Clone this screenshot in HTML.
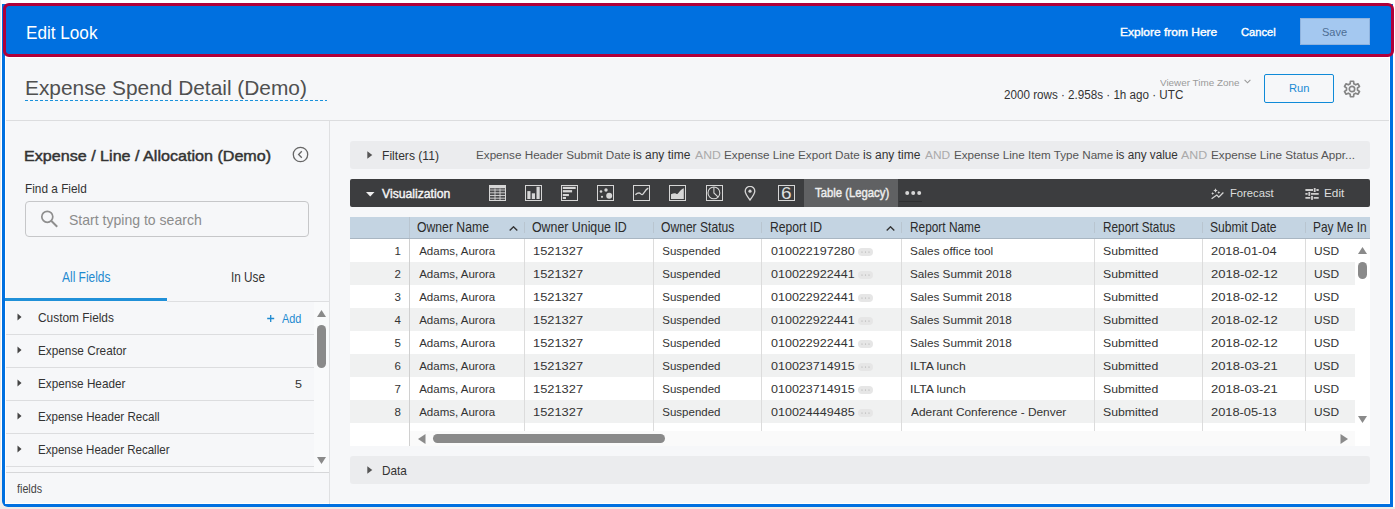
<!DOCTYPE html>
<html><head><meta charset="utf-8">
<style>
*{box-sizing:border-box;margin:0;padding:0}
html,body{width:1395px;height:509px;overflow:hidden;background:#fff;font-family:"Liberation Sans",sans-serif;}
.a{position:absolute;white-space:nowrap;line-height:1}
.s{position:absolute}

</style></head><body>
<div class="s" style="left:0px;top:0px;width:1px;height:509px;background:#e9e9e9;"></div>
<div class="s" style="left:0px;top:470px;width:2px;height:39px;background:#f1eeeb;"></div>
<div class="s" style="left:0px;top:498px;width:8px;height:11px;background:#f1eeeb;"></div>
<div class="s" style="left:0px;top:507px;width:1395px;height:2px;background:#eeebe8;"></div>
<div class="s" style="left:2px;top:4px;width:1391px;height:503px;background:#0070e0;border-radius:0 0 0 6px"></div>
<div class="s" style="left:5px;top:7px;width:1385px;height:497px;background:#fff;"></div>
<div class="s" style="left:6px;top:58px;width:1383px;height:445px;background:#f6f7f9;"></div>
<div class="s" style="left:3px;top:3px;width:1391px;height:54px;border:3px solid #b0003a;border-radius:6px;background:#0070e0"></div>
<div class="s" style="left:1300px;top:18px;width:70px;height:27px;background:#a4c8f0;border:1px solid #8fb3de"></div>
<svg class="s" style="left:25px;top:100px" width="302" height="1" viewBox="0 0 302 1"><line x1="0" y1="0.5" x2="302" y2="0.5" stroke="#1a92dc" stroke-width="1.1" stroke-dasharray="3 2"/></svg>
<svg class="s" style="left:1244px;top:79px" width="7" height="5" viewBox="0 0 7 5"><path d="M0.6 0.8 L3.5 3.8 L6.4 0.8" fill="none" stroke="#9a9a9a" stroke-width="1.1"/></svg>
<div class="s" style="left:1264px;top:74px;width:70px;height:29px;border:1px solid #0f8ad8;border-radius:2px;background:#f6f7f9"></div>
<svg class="s" style="left:1343px;top:80px" width="18" height="18" viewBox="0 0 18 18"><path d="M7.18 3.71 L7.42 1.26 L10.58 1.26 L10.82 3.71 L12.67 4.77 L14.92 3.77 L16.49 6.49 L14.50 7.93 L14.50 10.07 L16.49 11.51 L14.92 14.23 L12.67 13.23 L10.82 14.29 L10.58 16.74 L7.42 16.74 L7.18 14.29 L5.33 13.23 L3.08 14.23 L1.51 11.51 L3.50 10.07 L3.50 7.93 L1.51 6.49 L3.08 3.77 L5.33 4.77z" fill="none" stroke="#858585" stroke-width="1.7" stroke-linejoin="round"/><circle cx="9" cy="9" r="2.7" fill="none" stroke="#858585" stroke-width="1.7"/></svg>
<div class="s" style="left:6px;top:120px;width:1383px;height:1px;background:#dcdddf;"></div>
<div class="s" style="left:329px;top:121px;width:1px;height:383px;background:#dfe0e2;"></div>
<svg class="s" style="left:292px;top:146px" width="17" height="17" viewBox="0 0 17 17"><circle cx="8.5" cy="8.5" r="7.2" fill="none" stroke="#666" stroke-width="1.3"/><path d="M9.8 5.3 L6.6 8.5 L9.8 11.7" fill="none" stroke="#666" stroke-width="1.3"/></svg>
<div class="s" style="left:25px;top:201px;width:284px;height:36px;border:1px solid #c6c7c9;border-radius:4px"></div>
<svg class="s" style="left:40px;top:209px" width="19" height="19" viewBox="0 0 19 19"><circle cx="7.3" cy="7.8" r="5.5" fill="none" stroke="#8e8e8e" stroke-width="1.7"/><path d="M11.2 11.7 L17.2 17.7" stroke="#8e8e8e" stroke-width="2"/></svg>
<div class="s" style="left:5px;top:298px;width:162px;height:3px;background:#2090d8;"></div>
<div class="s" style="left:167px;top:301px;width:162px;height:1px;background:#dedfe1;"></div>
<svg class="s" style="left:17px;top:313px" width="5" height="8" viewBox="0 0 5 8"><path d="M0.5 0.5 L4.5 4 L0.5 7.5z" fill="#444"/></svg>
<div class="s" style="left:6px;top:334px;width:308px;height:1px;background:#dcdddf;"></div>
<svg class="s" style="left:17px;top:346px" width="5" height="8" viewBox="0 0 5 8"><path d="M0.5 0.5 L4.5 4 L0.5 7.5z" fill="#444"/></svg>
<div class="s" style="left:6px;top:367px;width:308px;height:1px;background:#dcdddf;"></div>
<svg class="s" style="left:17px;top:379px" width="5" height="8" viewBox="0 0 5 8"><path d="M0.5 0.5 L4.5 4 L0.5 7.5z" fill="#444"/></svg>
<div class="s" style="left:6px;top:400px;width:308px;height:1px;background:#dcdddf;"></div>
<svg class="s" style="left:17px;top:412px" width="5" height="8" viewBox="0 0 5 8"><path d="M0.5 0.5 L4.5 4 L0.5 7.5z" fill="#444"/></svg>
<div class="s" style="left:6px;top:433px;width:308px;height:1px;background:#dcdddf;"></div>
<svg class="s" style="left:17px;top:445px" width="5" height="8" viewBox="0 0 5 8"><path d="M0.5 0.5 L4.5 4 L0.5 7.5z" fill="#444"/></svg>
<div class="s" style="left:6px;top:466px;width:308px;height:1px;background:#dcdddf;"></div>
<svg class="s" style="left:267px;top:315px" width="8" height="7" viewBox="0 0 8 7"><path d="M3.7 0 V7 M0.2 3.5 H7.2" stroke="#1f8ad0" stroke-width="1.3"/></svg>
<div class="s" style="left:314px;top:302px;width:15px;height:170px;background:#f9fafb;"></div>
<svg class="s" style="left:317px;top:310px" width="9" height="7" viewBox="0 0 9 7"><path d="M0 7 L4.5 0 L9 7z" fill="#8a8a8a"/></svg>
<div class="s" style="left:317px;top:325px;width:9px;height:43px;background:#8a8a8a;border-radius:4.5px"></div>
<svg class="s" style="left:317px;top:457px" width="9" height="7" viewBox="0 0 9 7"><path d="M0 0 L4.5 7 L9 0z" fill="#8a8a8a"/></svg>
<div class="s" style="left:6px;top:472px;width:323px;height:1px;background:#d6d7d9;"></div>
<div class="s" style="left:350px;top:141px;width:1020px;height:28px;background:#ebecee;border-radius:3px"></div>
<svg class="s" style="left:367px;top:151px" width="6" height="8" viewBox="0 0 6 8"><path d="M0.3 0.3 L5.3 4 L0.3 7.7z" fill="#555"/></svg>
<div class="s" style="left:350px;top:179px;width:1020px;height:28px;background:#3c3d3f;border-radius:2px"></div>
<svg class="s" style="left:366px;top:192px" width="9" height="5" viewBox="0 0 9 5"><path d="M0 0 L8.5 0 L4.25 4.5z" fill="#eee"/></svg>
<svg class="s" style="left:489px;top:185px" width="17" height="16" viewBox="0 0 17 16"><rect x="0.5" y="0.5" width="16" height="15" fill="none" stroke="#d6d6d6"/><rect x="1" y="1" width="15" height="2.5" fill="#d6d6d6"/><rect x="1" y="3.5" width="15" height="11.5" fill="#4a4b4d"/><path d="M1 5H16M1 7.8H16M1 10.5H16M1 13.2H16M6 3.5V15M11 3.5V15" stroke="#d6d6d6" stroke-width="0.9"/></svg>
<svg class="s" style="left:525px;top:185px" width="17" height="16" viewBox="0 0 17 16"><rect x="0.5" y="0.5" width="16" height="15" fill="none" stroke="#d6d6d6"/><rect x="2.3" y="6.1" width="3.2" height="7.9" fill="#d6d6d6"/><rect x="6.8" y="8.3" width="3.2" height="5.7" fill="#d6d6d6"/><rect x="11.5" y="1.8" width="3.2" height="12.2" fill="#d6d6d6"/></svg>
<svg class="s" style="left:561px;top:185px" width="17" height="16" viewBox="0 0 17 16"><rect x="0.5" y="0.5" width="16" height="15" fill="none" stroke="#d6d6d6"/><rect x="1.8" y="1.8" width="12.9" height="2.2" fill="#d6d6d6"/><rect x="1.8" y="5.1" width="9.3" height="2.3" fill="#d6d6d6"/><rect x="1.8" y="9" width="6.1" height="2.1" fill="#d6d6d6"/><rect x="1.8" y="12" width="3.2" height="2" fill="#d6d6d6"/></svg>
<svg class="s" style="left:597px;top:185px" width="17" height="16" viewBox="0 0 17 16"><rect x="0.5" y="0.5" width="16" height="15" fill="none" stroke="#d6d6d6"/><circle cx="4" cy="6.5" r="1.3" fill="#d6d6d6"/><circle cx="9" cy="5" r="1.7" fill="#d6d6d6"/><circle cx="5" cy="11.8" r="1.1" fill="#d6d6d6"/><circle cx="12.2" cy="10.8" r="3" fill="#d6d6d6"/></svg>
<svg class="s" style="left:633px;top:185px" width="17" height="16" viewBox="0 0 17 16"><rect x="0.5" y="0.5" width="16" height="15" fill="none" stroke="#d6d6d6"/><path d="M2.4 9.7 C4 8 5 7.9 6 7.9 C7.5 8 8 9.7 9.2 9.7 C10.5 9.7 12 4.5 15.3 3.2" fill="none" stroke="#d6d6d6" stroke-width="1.3"/></svg>
<svg class="s" style="left:669px;top:185px" width="17" height="16" viewBox="0 0 17 16"><rect x="0.5" y="0.5" width="16" height="15" fill="none" stroke="#d6d6d6"/><path d="M2 14 V9.2 C3.5 8.5 5 8.2 6.2 8.3 C7.2 8.5 7.5 9.3 8.3 9 C10 8 11.5 4.3 14.8 3.3 V14z" fill="#d6d6d6"/></svg>
<svg class="s" style="left:706px;top:185px" width="17" height="16" viewBox="0 0 17 16"><rect x="0.5" y="0.5" width="16" height="15" fill="none" stroke="#d6d6d6"/><circle cx="7.9" cy="7.9" r="5.9" fill="none" stroke="#d6d6d6" stroke-width="1.1"/><path d="M7.9 2 V7.9 L12.2 12.2" fill="none" stroke="#d6d6d6" stroke-width="1.1"/></svg>
<svg class="s" style="left:744px;top:186px" width="12" height="15" viewBox="0 0 12 15"><path d="M6 14 C3 10 1.2 7.5 1.2 5.2 A4.8 4.8 0 0 1 10.8 5.2 C10.8 7.5 9 10 6 14z" fill="none" stroke="#d6d6d6" stroke-width="1.3"/><circle cx="6" cy="5.2" r="1.6" fill="#d6d6d6"/></svg>
<svg class="s" style="left:778px;top:185px" width="17" height="16" viewBox="0 0 17 16"><rect x="0.5" y="0.5" width="16" height="15" fill="none" stroke="#d6d6d6"/></svg>
<div class="s" style="left:804px;top:179px;width:94px;height:28px;background:#606163;"></div>
<svg class="s" style="left:905px;top:190px" width="17" height="6" viewBox="0 0 17 6"><circle cx="2.2" cy="3" r="2" fill="#d6d6d6"/><circle cx="8.2" cy="3" r="2" fill="#d6d6d6"/><circle cx="14.2" cy="3" r="2" fill="#d6d6d6"/></svg>
<div class="s" style="left:899px;top:201px;width:23px;height:1px;background:#2f3032;"></div>
<svg class="s" style="left:1210px;top:187px" width="15" height="14" viewBox="0 0 15 14"><path d="M1.6 11.8 L6.8 8 L8.8 10.1 L13.4 5.5" fill="none" stroke="#d6d6d6" stroke-width="1.3"/><path d="M5.5 1.3 L6.2 2.8 L7.7 3.5 L6.2 4.2 L5.5 5.7 L4.8 4.2 L3.3 3.5 L4.8 2.8z M2.7 5 L3.2 6 L4.2 6.5 L3.2 7 L2.7 8 L2.2 7 L1.2 6.5 L2.2 6z M8.8 4 L9.3 5 L10.3 5.5 L9.3 6 L8.8 7 L8.3 6 L7.3 5.5 L8.3 5z" fill="#d6d6d6"/></svg>
<svg class="s" style="left:1305px;top:187px" width="14" height="14" viewBox="0 0 14 14"><path d="M0.4 3H13.7M0.4 6.9H13.7M0.4 10.9H13.7" stroke="#cfcfcf" stroke-width="1.8"/><rect x="8" y="0.5" width="3.4" height="5" fill="#3c3d3f"/><rect x="8.8" y="1" width="1.8" height="4" fill="#cfcfcf"/><rect x="2.6" y="4.4" width="3.4" height="5" fill="#3c3d3f"/><rect x="3.4" y="4.9" width="1.8" height="4" fill="#cfcfcf"/><rect x="5.3" y="8.4" width="3.4" height="5" fill="#3c3d3f"/><rect x="6.1" y="8.9" width="1.8" height="4" fill="#cfcfcf"/></svg>
<div class="s" style="left:350px;top:217px;width:1020px;height:229px;background:#fff;"></div>
<div class="s" style="left:350px;top:217px;width:1020px;height:21px;background:#c4d4e2;"></div>
<div class="s" style="left:350px;top:238px;width:1020px;height:1px;background:#a9b6c2;"></div>
<div class="s" style="left:350px;top:262px;width:1005px;height:23px;background:#f0f1f1;"></div>
<div class="s" style="left:350px;top:308px;width:1005px;height:23px;background:#f0f1f1;"></div>
<div class="s" style="left:350px;top:354px;width:1005px;height:23px;background:#f0f1f1;"></div>
<div class="s" style="left:350px;top:400px;width:1005px;height:23px;background:#f0f1f1;"></div>
<div class="s" style="left:410px;top:431px;width:945px;height:15px;background:#fafafa;"></div>
<div class="s" style="left:524px;top:239px;width:1px;height:192px;background:#dcdcdc;"></div>
<div class="s" style="left:524px;top:222px;width:1px;height:11px;background:#b9c5d0;"></div>
<div class="s" style="left:653px;top:239px;width:1px;height:192px;background:#dcdcdc;"></div>
<div class="s" style="left:653px;top:222px;width:1px;height:11px;background:#b9c5d0;"></div>
<div class="s" style="left:761px;top:239px;width:1px;height:192px;background:#dcdcdc;"></div>
<div class="s" style="left:761px;top:222px;width:1px;height:11px;background:#b9c5d0;"></div>
<div class="s" style="left:901px;top:239px;width:1px;height:192px;background:#dcdcdc;"></div>
<div class="s" style="left:901px;top:222px;width:1px;height:11px;background:#b9c5d0;"></div>
<div class="s" style="left:1094px;top:239px;width:1px;height:192px;background:#dcdcdc;"></div>
<div class="s" style="left:1094px;top:222px;width:1px;height:11px;background:#b9c5d0;"></div>
<div class="s" style="left:1202px;top:239px;width:1px;height:192px;background:#dcdcdc;"></div>
<div class="s" style="left:1202px;top:222px;width:1px;height:11px;background:#b9c5d0;"></div>
<div class="s" style="left:1305px;top:239px;width:1px;height:192px;background:#dcdcdc;"></div>
<div class="s" style="left:1305px;top:222px;width:1px;height:11px;background:#b9c5d0;"></div>
<div class="s" style="left:409px;top:239px;width:1px;height:207px;background:#d0d0d0;"></div>
<div class="s" style="left:409px;top:217px;width:1px;height:21px;background:#b9c5d0;"></div>
<div class="s" style="left:858px;top:248px;width:15px;height:8px;background:#e6e6e6;border-radius:4px"></div>
<svg class="s" style="left:861px;top:251px" width="9" height="2" viewBox="0 0 9 2"><circle cx="1" cy="1" r="0.6" fill="#aaa"/><circle cx="4.5" cy="1" r="0.6" fill="#aaa"/><circle cx="8" cy="1" r="0.6" fill="#aaa"/></svg>
<div class="s" style="left:858px;top:271px;width:15px;height:8px;background:#e6e6e6;border-radius:4px"></div>
<svg class="s" style="left:861px;top:274px" width="9" height="2" viewBox="0 0 9 2"><circle cx="1" cy="1" r="0.6" fill="#aaa"/><circle cx="4.5" cy="1" r="0.6" fill="#aaa"/><circle cx="8" cy="1" r="0.6" fill="#aaa"/></svg>
<div class="s" style="left:858px;top:294px;width:15px;height:8px;background:#e6e6e6;border-radius:4px"></div>
<svg class="s" style="left:861px;top:297px" width="9" height="2" viewBox="0 0 9 2"><circle cx="1" cy="1" r="0.6" fill="#aaa"/><circle cx="4.5" cy="1" r="0.6" fill="#aaa"/><circle cx="8" cy="1" r="0.6" fill="#aaa"/></svg>
<div class="s" style="left:858px;top:317px;width:15px;height:8px;background:#e6e6e6;border-radius:4px"></div>
<svg class="s" style="left:861px;top:320px" width="9" height="2" viewBox="0 0 9 2"><circle cx="1" cy="1" r="0.6" fill="#aaa"/><circle cx="4.5" cy="1" r="0.6" fill="#aaa"/><circle cx="8" cy="1" r="0.6" fill="#aaa"/></svg>
<div class="s" style="left:858px;top:340px;width:15px;height:8px;background:#e6e6e6;border-radius:4px"></div>
<svg class="s" style="left:861px;top:343px" width="9" height="2" viewBox="0 0 9 2"><circle cx="1" cy="1" r="0.6" fill="#aaa"/><circle cx="4.5" cy="1" r="0.6" fill="#aaa"/><circle cx="8" cy="1" r="0.6" fill="#aaa"/></svg>
<div class="s" style="left:858px;top:363px;width:15px;height:8px;background:#e6e6e6;border-radius:4px"></div>
<svg class="s" style="left:861px;top:366px" width="9" height="2" viewBox="0 0 9 2"><circle cx="1" cy="1" r="0.6" fill="#aaa"/><circle cx="4.5" cy="1" r="0.6" fill="#aaa"/><circle cx="8" cy="1" r="0.6" fill="#aaa"/></svg>
<div class="s" style="left:858px;top:386px;width:15px;height:8px;background:#e6e6e6;border-radius:4px"></div>
<svg class="s" style="left:861px;top:389px" width="9" height="2" viewBox="0 0 9 2"><circle cx="1" cy="1" r="0.6" fill="#aaa"/><circle cx="4.5" cy="1" r="0.6" fill="#aaa"/><circle cx="8" cy="1" r="0.6" fill="#aaa"/></svg>
<div class="s" style="left:858px;top:409px;width:15px;height:8px;background:#e6e6e6;border-radius:4px"></div>
<svg class="s" style="left:861px;top:412px" width="9" height="2" viewBox="0 0 9 2"><circle cx="1" cy="1" r="0.6" fill="#aaa"/><circle cx="4.5" cy="1" r="0.6" fill="#aaa"/><circle cx="8" cy="1" r="0.6" fill="#aaa"/></svg>
<svg class="s" style="left:509px;top:226px" width="9" height="5" viewBox="0 0 9 5"><path d="M0.7 4.5 L4.5 0.8 L8.3 4.5" fill="none" stroke="#333" stroke-width="1.4"/></svg>
<svg class="s" style="left:886px;top:226px" width="9" height="5" viewBox="0 0 9 5"><path d="M0.7 4.5 L4.5 0.8 L8.3 4.5" fill="none" stroke="#333" stroke-width="1.4"/></svg>
<svg class="s" style="left:418px;top:434px" width="8" height="10" viewBox="0 0 8 10"><path d="M7.5 0 L0 5 L7.5 10z" fill="#8a8a8a"/></svg>
<div class="s" style="left:433px;top:434px;width:232px;height:9px;background:#8a8a8a;border-radius:4.5px"></div>
<svg class="s" style="left:1340px;top:434px" width="8" height="10" viewBox="0 0 8 10"><path d="M0.5 0 L8 5 L0.5 10z" fill="#8a8a8a"/></svg>
<svg class="s" style="left:1358px;top:247px" width="9" height="7" viewBox="0 0 9 7"><path d="M0 7 L4.5 0 L9 7z" fill="#8a8a8a"/></svg>
<div class="s" style="left:1358px;top:262px;width:9px;height:17px;background:#8a8a8a;border-radius:4.5px"></div>
<svg class="s" style="left:1358px;top:416px" width="9" height="7" viewBox="0 0 9 7"><path d="M0 0 L4.5 7 L9 0z" fill="#8a8a8a"/></svg>
<div class="s" style="left:350px;top:456px;width:1020px;height:28px;background:#ebecee;border-radius:3px"></div>
<svg class="s" style="left:367px;top:466px" width="6" height="8" viewBox="0 0 6 8"><path d="M0.3 0.3 L5.3 4 L0.3 7.7z" fill="#555"/></svg>
<div class="a" style="left:25.57px;top:24.10px;font-size:18.5px;font-weight:normal;color:#fff;transform:scaleX(0.9263);transform-origin:0 0;">Edit Look</div>
<div class="a" style="left:1119.56px;top:26.90px;font-size:11.5px;font-weight:normal;color:#fff;transform:scaleX(1.0424);transform-origin:0 0;-webkit-text-stroke-width:0.4px;">Explore from Here</div>
<div class="a" style="left:1241.00px;top:26.90px;font-size:11.5px;font-weight:normal;color:#fff;transform:scaleX(0.9667);transform-origin:0 0;-webkit-text-stroke-width:0.4px;">Cancel</div>
<div class="a" style="left:1322.04px;top:26.90px;font-size:11.5px;font-weight:normal;color:#4d6e94;transform:scaleX(0.9600);transform-origin:0 0;">Save</div>
<div class="a" style="left:24.56px;top:77.70px;font-size:20.5px;font-weight:normal;color:#505050;transform:scaleX(1.0182);transform-origin:0 0;">Expense Spend Detail (Demo)</div>
<div class="a" style="left:1160.00px;top:78.80px;font-size:9.3px;font-weight:normal;color:#9a9a9a;transform:scaleX(1.0622);transform-origin:0 0;">Viewer Time Zone</div>
<div class="a" style="left:1003.73px;top:88.90px;font-size:12px;font-weight:normal;color:#333;transform:scaleX(0.9705);transform-origin:0 0;">2000 rows · 2.958s · 1h ago · UTC</div>
<div class="a" style="left:1288.63px;top:83.10px;font-size:11.5px;font-weight:normal;color:#1a8ad4;transform:scaleX(0.9700);transform-origin:0 0;">Run</div>
<div class="a" style="left:24.43px;top:148.30px;font-size:15px;font-weight:normal;color:#333;transform:scaleX(1.0738);transform-origin:0 0;-webkit-text-stroke-width:0.45px;">Expense / Line / Allocation (Demo)</div>
<div class="a" style="left:24.79px;top:181.90px;font-size:13px;font-weight:normal;color:#333;transform:scaleX(0.9091);transform-origin:0 0;">Find a Field</div>
<div class="a" style="left:69.23px;top:212.50px;font-size:14.5px;font-weight:normal;color:#8c8c8c;transform:scaleX(0.9689);transform-origin:0 0;">Start typing to search</div>
<div class="a" style="left:62.40px;top:270.00px;font-size:14px;font-weight:normal;color:#1f8ad0;transform:scaleX(0.8536);transform-origin:0 0;">All Fields</div>
<div class="a" style="left:230.96px;top:270.00px;font-size:14px;font-weight:normal;color:#333;transform:scaleX(0.8385);transform-origin:0 0;">In Use</div>
<div class="a" style="left:38.32px;top:311.00px;font-size:13.5px;font-weight:normal;color:#333;transform:scaleX(0.8800);transform-origin:0 0;">Custom Fields</div>
<div class="a" style="left:38.33px;top:344.00px;font-size:13.5px;font-weight:normal;color:#333;transform:scaleX(0.8730);transform-origin:0 0;">Expense Creator</div>
<div class="a" style="left:38.33px;top:377.00px;font-size:13.5px;font-weight:normal;color:#333;transform:scaleX(0.8687);transform-origin:0 0;">Expense Header</div>
<div class="a" style="left:38.34px;top:410.00px;font-size:13.5px;font-weight:normal;color:#333;transform:scaleX(0.8571);transform-origin:0 0;">Expense Header Recall</div>
<div class="a" style="left:38.35px;top:443.00px;font-size:13.5px;font-weight:normal;color:#333;transform:scaleX(0.8549);transform-origin:0 0;">Expense Header Recaller</div>
<div class="a" style="left:281.80px;top:311.60px;font-size:13px;font-weight:normal;color:#1f8ad0;transform:scaleX(0.8391);transform-origin:0 0;">Add</div>
<div class="a" style="left:294.66px;top:379.00px;font-size:11px;font-weight:normal;color:#333;transform:scaleX(1.1400);transform-origin:0 0;">5</div>
<div class="a" style="left:17.30px;top:482.90px;font-size:12px;font-weight:normal;color:#444;transform:scaleX(0.8964);transform-origin:0 0;">fields</div>
<div class="a" style="left:381.70px;top:148.70px;font-size:13.5px;font-weight:normal;color:#333;transform:scaleX(0.8968);transform-origin:0 0;">Filters (11)</div>
<div class="a" style="left:475.83px;top:150.70px;font-size:10px;font-weight:normal;color:#555;transform:scaleX(1.1679);transform-origin:0 0;">Expense Header Submit Date</div>
<div class="a" style="left:633.00px;top:148.70px;font-size:12px;font-weight:normal;color:#333;">is any time</div>
<div class="a" style="left:695.00px;top:150.70px;font-size:10px;font-weight:normal;color:#aaa;transform:scaleX(1.2190);transform-origin:0 0;">AND</div>
<div class="a" style="left:724.43px;top:150.70px;font-size:10px;font-weight:normal;color:#555;transform:scaleX(1.1687);transform-origin:0 0;">Expense Line Export Date</div>
<div class="a" style="left:863.00px;top:148.70px;font-size:12px;font-weight:normal;color:#333;">is any time</div>
<div class="a" style="left:925.00px;top:150.70px;font-size:10px;font-weight:normal;color:#aaa;transform:scaleX(1.1905);transform-origin:0 0;">AND</div>
<div class="a" style="left:954.33px;top:150.70px;font-size:10px;font-weight:normal;color:#555;transform:scaleX(1.1667);transform-origin:0 0;">Expense Line Item Type Name</div>
<div class="a" style="left:1115.52px;top:148.70px;font-size:12px;font-weight:normal;color:#333;transform:scaleX(0.9758);transform-origin:0 0;">is any value</div>
<div class="a" style="left:1181.00px;top:150.70px;font-size:10px;font-weight:normal;color:#aaa;transform:scaleX(1.2381);transform-origin:0 0;">AND</div>
<div class="a" style="left:1210.83px;top:150.70px;font-size:10px;font-weight:normal;color:#555;transform:scaleX(1.1711);transform-origin:0 0;">Expense Line Status Appr...</div>
<div class="a" style="left:381.80px;top:186.70px;font-size:13.5px;font-weight:normal;color:#f4f4f4;transform:scaleX(0.9040);transform-origin:0 0;-webkit-text-stroke-width:0.45px;">Visualization</div>
<div class="a" style="left:780.51px;top:186.00px;font-size:16px;font-weight:normal;color:#ddd;transform:scaleX(1.1857);transform-origin:0 0;">6</div>
<div class="a" style="left:814.50px;top:185.90px;font-size:13.5px;font-weight:normal;color:#eee;transform:scaleX(0.8375);transform-origin:0 0;-webkit-text-stroke-width:0.45px;">Table (Legacy)</div>
<div class="a" style="left:1230.02px;top:188.00px;font-size:11.5px;font-weight:normal;color:#ddd;transform:scaleX(0.9773);transform-origin:0 0;">Forecast</div>
<div class="a" style="left:1324.47px;top:188.00px;font-size:11.5px;font-weight:normal;color:#ddd;transform:scaleX(1.0263);transform-origin:0 0;">Edit</div>
<div class="a" style="left:417.44px;top:220.10px;font-size:14.2px;font-weight:normal;color:#2b2b2b;transform:scaleX(0.8610);transform-origin:0 0;">Owner Name</div>
<div class="a" style="left:531.93px;top:220.10px;font-size:14.2px;font-weight:normal;color:#2b2b2b;transform:scaleX(0.8710);transform-origin:0 0;">Owner Unique ID</div>
<div class="a" style="left:661.05px;top:220.10px;font-size:14.2px;font-weight:normal;color:#2b2b2b;transform:scaleX(0.8529);transform-origin:0 0;">Owner Status</div>
<div class="a" style="left:769.64px;top:220.10px;font-size:14.2px;font-weight:normal;color:#2b2b2b;transform:scaleX(0.8559);transform-origin:0 0;">Report ID</div>
<div class="a" style="left:909.76px;top:220.10px;font-size:14.2px;font-weight:normal;color:#2b2b2b;transform:scaleX(0.8361);transform-origin:0 0;">Report Name</div>
<div class="a" style="left:1102.67px;top:220.10px;font-size:14.2px;font-weight:normal;color:#2b2b2b;transform:scaleX(0.8314);transform-origin:0 0;">Report Status</div>
<div class="a" style="left:1210.15px;top:220.10px;font-size:14.2px;font-weight:normal;color:#2b2b2b;transform:scaleX(0.8532);transform-origin:0 0;">Submit Date</div>
<div class="a" style="left:1313.46px;top:220.10px;font-size:14.2px;font-weight:normal;color:#2b2b2b;transform:scaleX(0.8387);transform-origin:0 0;">Pay Me In</div>
<div class="a" style="left:394.60px;top:245.90px;font-size:11.5px;font-weight:normal;color:#333;">1</div>
<div class="a" style="left:419.20px;top:245.90px;font-size:11.5px;font-weight:normal;color:#333;">Adams, Aurora</div>
<div class="a" style="left:533.18px;top:245.90px;font-size:11.5px;font-weight:normal;color:#333;transform:scaleX(1.1186);transform-origin:0 0;">1521327</div>
<div class="a" style="left:662.30px;top:245.90px;font-size:11.5px;font-weight:normal;color:#333;">Suspended</div>
<div class="a" style="left:771.00px;top:245.90px;font-size:11.5px;font-weight:normal;color:#333;transform:scaleX(1.0895);transform-origin:0 0;">010022197280</div>
<div class="a" style="left:909.97px;top:245.90px;font-size:11.5px;font-weight:normal;color:#333;transform:scaleX(1.0275);transform-origin:0 0;">Sales office tool</div>
<div class="a" style="left:1102.93px;top:245.90px;font-size:11.5px;font-weight:normal;color:#333;transform:scaleX(1.0660);transform-origin:0 0;">Submitted</div>
<div class="a" style="left:1210.88px;top:245.90px;font-size:11.5px;font-weight:normal;color:#333;transform:scaleX(1.1155);transform-origin:0 0;">2018-01-04</div>
<div class="a" style="left:1313.97px;top:245.90px;font-size:11.5px;font-weight:normal;color:#333;transform:scaleX(1.0348);transform-origin:0 0;">USD</div>
<div class="a" style="left:394.60px;top:268.90px;font-size:11.5px;font-weight:normal;color:#333;">2</div>
<div class="a" style="left:419.20px;top:268.90px;font-size:11.5px;font-weight:normal;color:#333;">Adams, Aurora</div>
<div class="a" style="left:533.18px;top:268.90px;font-size:11.5px;font-weight:normal;color:#333;transform:scaleX(1.1186);transform-origin:0 0;">1521327</div>
<div class="a" style="left:662.30px;top:268.90px;font-size:11.5px;font-weight:normal;color:#333;">Suspended</div>
<div class="a" style="left:771.00px;top:268.90px;font-size:11.5px;font-weight:normal;color:#333;transform:scaleX(1.0895);transform-origin:0 0;">010022922441</div>
<div class="a" style="left:909.98px;top:268.90px;font-size:11.5px;font-weight:normal;color:#333;transform:scaleX(1.0204);transform-origin:0 0;">Sales Summit 2018</div>
<div class="a" style="left:1102.93px;top:268.90px;font-size:11.5px;font-weight:normal;color:#333;transform:scaleX(1.0660);transform-origin:0 0;">Submitted</div>
<div class="a" style="left:1210.86px;top:268.90px;font-size:11.5px;font-weight:normal;color:#333;transform:scaleX(1.1351);transform-origin:0 0;">2018-02-12</div>
<div class="a" style="left:1313.97px;top:268.90px;font-size:11.5px;font-weight:normal;color:#333;transform:scaleX(1.0348);transform-origin:0 0;">USD</div>
<div class="a" style="left:394.60px;top:291.90px;font-size:11.5px;font-weight:normal;color:#333;">3</div>
<div class="a" style="left:419.20px;top:291.90px;font-size:11.5px;font-weight:normal;color:#333;">Adams, Aurora</div>
<div class="a" style="left:533.18px;top:291.90px;font-size:11.5px;font-weight:normal;color:#333;transform:scaleX(1.1186);transform-origin:0 0;">1521327</div>
<div class="a" style="left:662.30px;top:291.90px;font-size:11.5px;font-weight:normal;color:#333;">Suspended</div>
<div class="a" style="left:771.00px;top:291.90px;font-size:11.5px;font-weight:normal;color:#333;transform:scaleX(1.0895);transform-origin:0 0;">010022922441</div>
<div class="a" style="left:909.98px;top:291.90px;font-size:11.5px;font-weight:normal;color:#333;transform:scaleX(1.0204);transform-origin:0 0;">Sales Summit 2018</div>
<div class="a" style="left:1102.93px;top:291.90px;font-size:11.5px;font-weight:normal;color:#333;transform:scaleX(1.0660);transform-origin:0 0;">Submitted</div>
<div class="a" style="left:1210.86px;top:291.90px;font-size:11.5px;font-weight:normal;color:#333;transform:scaleX(1.1351);transform-origin:0 0;">2018-02-12</div>
<div class="a" style="left:1313.97px;top:291.90px;font-size:11.5px;font-weight:normal;color:#333;transform:scaleX(1.0348);transform-origin:0 0;">USD</div>
<div class="a" style="left:394.60px;top:314.90px;font-size:11.5px;font-weight:normal;color:#333;">4</div>
<div class="a" style="left:419.20px;top:314.90px;font-size:11.5px;font-weight:normal;color:#333;">Adams, Aurora</div>
<div class="a" style="left:533.18px;top:314.90px;font-size:11.5px;font-weight:normal;color:#333;transform:scaleX(1.1186);transform-origin:0 0;">1521327</div>
<div class="a" style="left:662.30px;top:314.90px;font-size:11.5px;font-weight:normal;color:#333;">Suspended</div>
<div class="a" style="left:771.00px;top:314.90px;font-size:11.5px;font-weight:normal;color:#333;transform:scaleX(1.0895);transform-origin:0 0;">010022922441</div>
<div class="a" style="left:909.98px;top:314.90px;font-size:11.5px;font-weight:normal;color:#333;transform:scaleX(1.0204);transform-origin:0 0;">Sales Summit 2018</div>
<div class="a" style="left:1102.93px;top:314.90px;font-size:11.5px;font-weight:normal;color:#333;transform:scaleX(1.0660);transform-origin:0 0;">Submitted</div>
<div class="a" style="left:1210.86px;top:314.90px;font-size:11.5px;font-weight:normal;color:#333;transform:scaleX(1.1351);transform-origin:0 0;">2018-02-12</div>
<div class="a" style="left:1313.97px;top:314.90px;font-size:11.5px;font-weight:normal;color:#333;transform:scaleX(1.0348);transform-origin:0 0;">USD</div>
<div class="a" style="left:394.60px;top:337.90px;font-size:11.5px;font-weight:normal;color:#333;">5</div>
<div class="a" style="left:419.20px;top:337.90px;font-size:11.5px;font-weight:normal;color:#333;">Adams, Aurora</div>
<div class="a" style="left:533.18px;top:337.90px;font-size:11.5px;font-weight:normal;color:#333;transform:scaleX(1.1186);transform-origin:0 0;">1521327</div>
<div class="a" style="left:662.30px;top:337.90px;font-size:11.5px;font-weight:normal;color:#333;">Suspended</div>
<div class="a" style="left:771.00px;top:337.90px;font-size:11.5px;font-weight:normal;color:#333;transform:scaleX(1.0895);transform-origin:0 0;">010022922441</div>
<div class="a" style="left:909.98px;top:337.90px;font-size:11.5px;font-weight:normal;color:#333;transform:scaleX(1.0204);transform-origin:0 0;">Sales Summit 2018</div>
<div class="a" style="left:1102.93px;top:337.90px;font-size:11.5px;font-weight:normal;color:#333;transform:scaleX(1.0660);transform-origin:0 0;">Submitted</div>
<div class="a" style="left:1210.86px;top:337.90px;font-size:11.5px;font-weight:normal;color:#333;transform:scaleX(1.1351);transform-origin:0 0;">2018-02-12</div>
<div class="a" style="left:1313.97px;top:337.90px;font-size:11.5px;font-weight:normal;color:#333;transform:scaleX(1.0348);transform-origin:0 0;">USD</div>
<div class="a" style="left:394.60px;top:360.90px;font-size:11.5px;font-weight:normal;color:#333;">6</div>
<div class="a" style="left:419.20px;top:360.90px;font-size:11.5px;font-weight:normal;color:#333;">Adams, Aurora</div>
<div class="a" style="left:533.18px;top:360.90px;font-size:11.5px;font-weight:normal;color:#333;transform:scaleX(1.1186);transform-origin:0 0;">1521327</div>
<div class="a" style="left:662.30px;top:360.90px;font-size:11.5px;font-weight:normal;color:#333;">Suspended</div>
<div class="a" style="left:771.00px;top:360.90px;font-size:11.5px;font-weight:normal;color:#333;transform:scaleX(1.0895);transform-origin:0 0;">010023714915</div>
<div class="a" style="left:909.94px;top:360.90px;font-size:11.5px;font-weight:normal;color:#333;transform:scaleX(1.0588);transform-origin:0 0;">ILTA lunch</div>
<div class="a" style="left:1102.93px;top:360.90px;font-size:11.5px;font-weight:normal;color:#333;transform:scaleX(1.0660);transform-origin:0 0;">Submitted</div>
<div class="a" style="left:1210.86px;top:360.90px;font-size:11.5px;font-weight:normal;color:#333;transform:scaleX(1.1351);transform-origin:0 0;">2018-03-21</div>
<div class="a" style="left:1313.97px;top:360.90px;font-size:11.5px;font-weight:normal;color:#333;transform:scaleX(1.0348);transform-origin:0 0;">USD</div>
<div class="a" style="left:394.60px;top:383.90px;font-size:11.5px;font-weight:normal;color:#333;">7</div>
<div class="a" style="left:419.20px;top:383.90px;font-size:11.5px;font-weight:normal;color:#333;">Adams, Aurora</div>
<div class="a" style="left:533.18px;top:383.90px;font-size:11.5px;font-weight:normal;color:#333;transform:scaleX(1.1186);transform-origin:0 0;">1521327</div>
<div class="a" style="left:662.30px;top:383.90px;font-size:11.5px;font-weight:normal;color:#333;">Suspended</div>
<div class="a" style="left:771.00px;top:383.90px;font-size:11.5px;font-weight:normal;color:#333;transform:scaleX(1.0895);transform-origin:0 0;">010023714915</div>
<div class="a" style="left:909.94px;top:383.90px;font-size:11.5px;font-weight:normal;color:#333;transform:scaleX(1.0588);transform-origin:0 0;">ILTA lunch</div>
<div class="a" style="left:1102.93px;top:383.90px;font-size:11.5px;font-weight:normal;color:#333;transform:scaleX(1.0660);transform-origin:0 0;">Submitted</div>
<div class="a" style="left:1210.86px;top:383.90px;font-size:11.5px;font-weight:normal;color:#333;transform:scaleX(1.1351);transform-origin:0 0;">2018-03-21</div>
<div class="a" style="left:1313.97px;top:383.90px;font-size:11.5px;font-weight:normal;color:#333;transform:scaleX(1.0348);transform-origin:0 0;">USD</div>
<div class="a" style="left:394.60px;top:406.90px;font-size:11.5px;font-weight:normal;color:#333;">8</div>
<div class="a" style="left:419.20px;top:406.90px;font-size:11.5px;font-weight:normal;color:#333;">Adams, Aurora</div>
<div class="a" style="left:533.18px;top:406.90px;font-size:11.5px;font-weight:normal;color:#333;transform:scaleX(1.1186);transform-origin:0 0;">1521327</div>
<div class="a" style="left:662.30px;top:406.90px;font-size:11.5px;font-weight:normal;color:#333;">Suspended</div>
<div class="a" style="left:771.00px;top:406.90px;font-size:11.5px;font-weight:normal;color:#333;transform:scaleX(1.0895);transform-origin:0 0;">010024449485</div>
<div class="a" style="left:911.00px;top:406.90px;font-size:11.5px;font-weight:normal;color:#333;transform:scaleX(1.0333);transform-origin:0 0;">Aderant Conference - Denver</div>
<div class="a" style="left:1102.93px;top:406.90px;font-size:11.5px;font-weight:normal;color:#333;transform:scaleX(1.0660);transform-origin:0 0;">Submitted</div>
<div class="a" style="left:1210.88px;top:406.90px;font-size:11.5px;font-weight:normal;color:#333;transform:scaleX(1.1155);transform-origin:0 0;">2018-05-13</div>
<div class="a" style="left:1313.97px;top:406.90px;font-size:11.5px;font-weight:normal;color:#333;transform:scaleX(1.0348);transform-origin:0 0;">USD</div>
<div class="a" style="left:381.73px;top:463.80px;font-size:13.5px;font-weight:normal;color:#333;transform:scaleX(0.8714);transform-origin:0 0;">Data</div>
</body></html>
